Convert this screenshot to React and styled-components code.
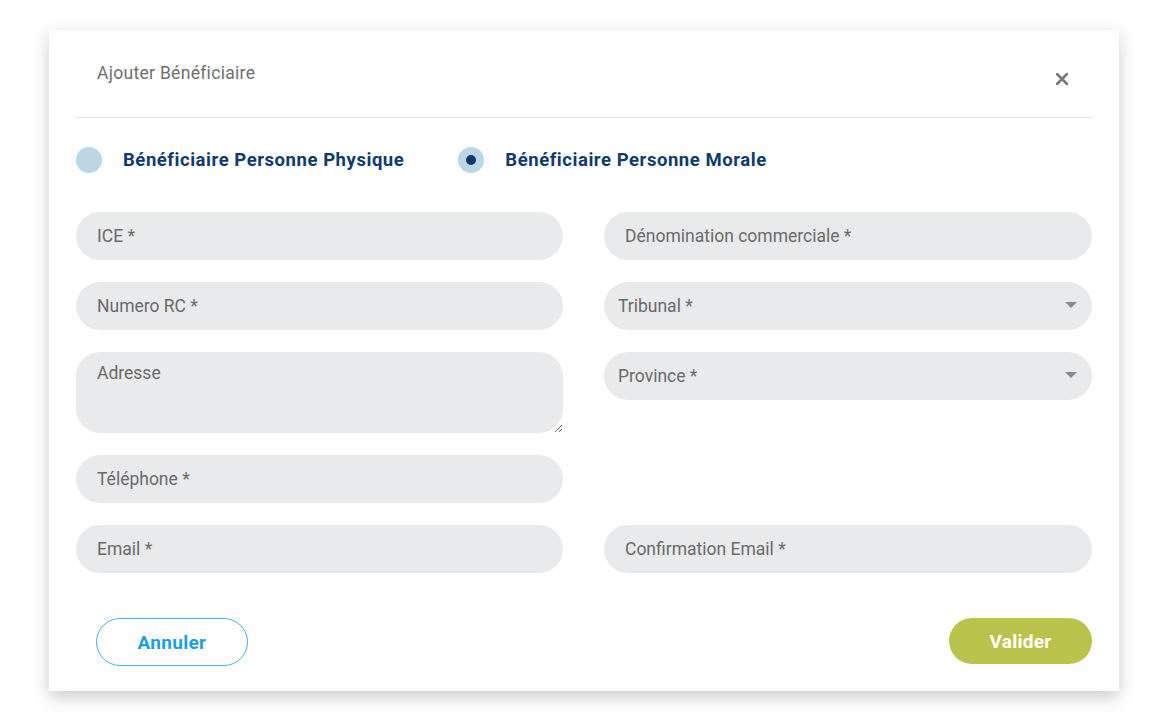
import React from "react";
import styled, { createGlobalStyle } from "styled-components";

const Global = createGlobalStyle`
  html, body { margin: 0; padding: 0; background: #ffffff; }
  body { font-family: Roboto, "Noto Sans", Arial, sans-serif; }
  * { box-sizing: border-box; }
`;

const Page = styled.div`
  padding: 30px 0 31px;
  display: flex;
  justify-content: center;
`;

const Dialog = styled.div`
  width: 1070px;
  height: 661px;
  background: #fff;
  box-shadow: 0 6px 16px rgba(50, 50, 70, 0.26);
  padding: 0 27px 25px;
  display: flex;
  flex-direction: column;
`;

const Header = styled.div`
  height: 88px;
  border-bottom: 1px solid #e1e4ea;
  display: flex;
  justify-content: space-between;
  align-items: flex-start;
  padding: 0 23px 0 21px;
`;

const Title = styled.h2`
  margin: 31px 0 0;
  font-size: 17.5px;
  letter-spacing: 0.3px;
  font-weight: 400;
  color: #6f6f6f;
  line-height: 24px;
`;

const Close = styled.button`
  margin: 42px 0 0;
  padding: 0;
  border: none;
  background: none;
  width: 14px;
  height: 14px;
  display: flex;
  align-items: center;
  justify-content: center;
  cursor: pointer;
`;

const RadioRow = styled.div`
  display: flex;
  gap: 54px;
  margin-top: 29px;
  height: 26px;
  align-items: center;
`;

const RadioItem = styled.label`
  display: flex;
  align-items: center;
  gap: 21px;
  font-size: 18.5px;
  letter-spacing: 0.55px;
  font-weight: 700;
  color: #0d3b6c;
  cursor: pointer;
`;

const RadioCircle = styled.span`
  width: 26px;
  height: 26px;
  border-radius: 50%;
  background: #bcd6e6;
  display: flex;
  align-items: center;
  justify-content: center;
  flex-shrink: 0;
  &::after {
    content: "";
    width: 10px;
    height: 10px;
    border-radius: 50%;
    background: ${(p) => (p.$checked ? "#0b3a6a" : "transparent")};
  }
`;

const Grid = styled.div`
  margin-top: 39px;
  display: grid;
  grid-template-columns: 487px 488px;
  column-gap: 41px;
  row-gap: 22px;
  align-items: start;
`;

const fieldBase = `
  width: 100%;
  border: none;
  outline: none;
  background: #e9eaec;
  font-family: Roboto, "Noto Sans", Arial, sans-serif;
  font-size: 17.5px;
  color: #555;
  &::placeholder { color: #6a6a6a; opacity: 1; }
`;

const Input = styled.input`
  ${fieldBase}
  height: 48px;
  border-radius: 24px;
  padding: 0 21px;
`;

const TextArea = styled.textarea`
  ${fieldBase}
  height: 81px;
  border-radius: 24px;
  padding: 11px 21px;
  resize: vertical;
  line-height: 20px;
`;

const SelectWrap = styled.div`
  position: relative;
  height: 48px;
`;

const Select = styled.select`
  ${fieldBase}
  height: 48px;
  border-radius: 24px;
  padding: 0 40px 0 14px;
  appearance: none;
  -webkit-appearance: none;
  color: #6a6a6a;
`;

const Caret = styled.span`
  position: absolute;
  right: 15px;
  top: 20px;
  width: 0;
  height: 0;
  border-left: 6px solid transparent;
  border-right: 6px solid transparent;
  border-top: 6px solid #8a8a8a;
  pointer-events: none;
`;

const Footer = styled.div`
  margin-top: auto;
  display: flex;
  justify-content: space-between;
  align-items: flex-start;
  padding-left: 20px;
`;

const Button = styled.button`
  height: ${(p) => (p.$primary ? "46px" : "48px")};
  width: ${(p) => (p.$primary ? "143px" : "152px")};
  border-radius: 24px;
  font-family: Roboto, "Noto Sans", Arial, sans-serif;
  font-size: 19px;
  letter-spacing: 0.3px;
  font-weight: 700;
  cursor: pointer;
  border: ${(p) => (p.$primary ? "none" : "1.5px solid #3db5ea")};
  background: ${(p) => (p.$primary ? "#bcc34c" : "#fff")};
  color: ${(p) => (p.$primary ? "#fff" : "#1a9fe2")};
`;

const Empty = styled.div``;

export default function App() {
  return (
    <>
      <Global />
      <Page>
        <Dialog>
          <Header>
            <Title>Ajouter Bénéficiaire</Title>
            <Close aria-label="Fermer">
              <svg width="12" height="12" viewBox="0 0 12 12">
                <path d="M1 1L11 11M11 1L1 11" stroke="#777" strokeWidth="2.6" strokeLinecap="round" />
              </svg>
            </Close>
          </Header>
          <RadioRow>
            <RadioItem>
              <RadioCircle />
              Bénéficiaire Personne Physique
            </RadioItem>
            <RadioItem>
              <RadioCircle $checked />
              Bénéficiaire Personne Morale
            </RadioItem>
          </RadioRow>
          <Grid>
            <Input placeholder="ICE *" />
            <Input placeholder="Dénomination commerciale *" />
            <Input placeholder="Numero RC *" />
            <SelectWrap>
              <Select defaultValue="">
                <option value="" disabled>Tribunal *</option>
              </Select>
              <Caret />
            </SelectWrap>
            <TextArea placeholder="Adresse" />
            <SelectWrap>
              <Select defaultValue="">
                <option value="" disabled>Province *</option>
              </Select>
              <Caret />
            </SelectWrap>
            <Input placeholder="Téléphone *" />
            <Empty />
            <Input placeholder="Email *" />
            <Input placeholder="Confirmation Email *" />
          </Grid>
          <Footer>
            <Button>Annuler</Button>
            <Button $primary>Valider</Button>
          </Footer>
        </Dialog>
      </Page>
    </>
  );
}
